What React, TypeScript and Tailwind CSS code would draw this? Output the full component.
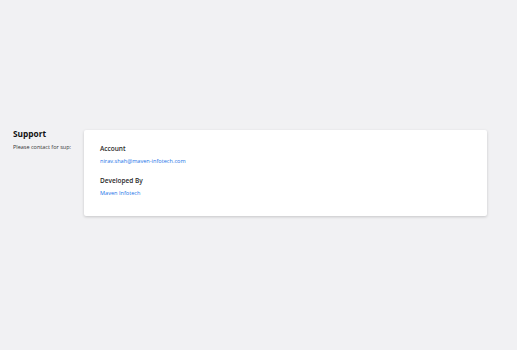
export default function App() {
  return (
    <div
      className="w-[517px] h-[350px] bg-[#f1f1f3] flex items-center"
      style={{ fontFamily: '"Open Sans", "Liberation Sans", sans-serif' }}
    >
      <div className="flex items-start w-full pl-[13px] pr-[30px] mb-[4px]">
        {/* Left description */}
        <div className="w-[71px] shrink-0 -mt-[2px] overflow-hidden">
          <h2 className="text-[8.3px] font-bold leading-[12px] text-[#111]">Support</h2>
          <p className="mt-[3px] text-[5.5px] leading-[8px] text-[#333] whitespace-nowrap">
            Please contact for sup:
          </p>
        </div>

        {/* Card */}
        <div className="flex-1 bg-white rounded-[2px] shadow-[0_1px_3px_rgba(0,0,0,0.18)] px-[16px] pt-[14px] pb-[19px]">
          <div className="text-[6.5px] font-semibold leading-[9px] text-[#2a2a2a]">Account</div>
          <a className="block mt-[4px] text-[5.6px] leading-[8px] text-[#1a73e8]">
            nirav.shah@maven-infotech.com
          </a>
          <div className="mt-[11px] text-[6.5px] font-semibold leading-[9px] text-[#2a2a2a]">Developed By</div>
          <a className="block mt-[4px] text-[5.6px] leading-[8px] text-[#1a73e8]">Maven Infotech</a>
        </div>
      </div>
    </div>
  )
}
